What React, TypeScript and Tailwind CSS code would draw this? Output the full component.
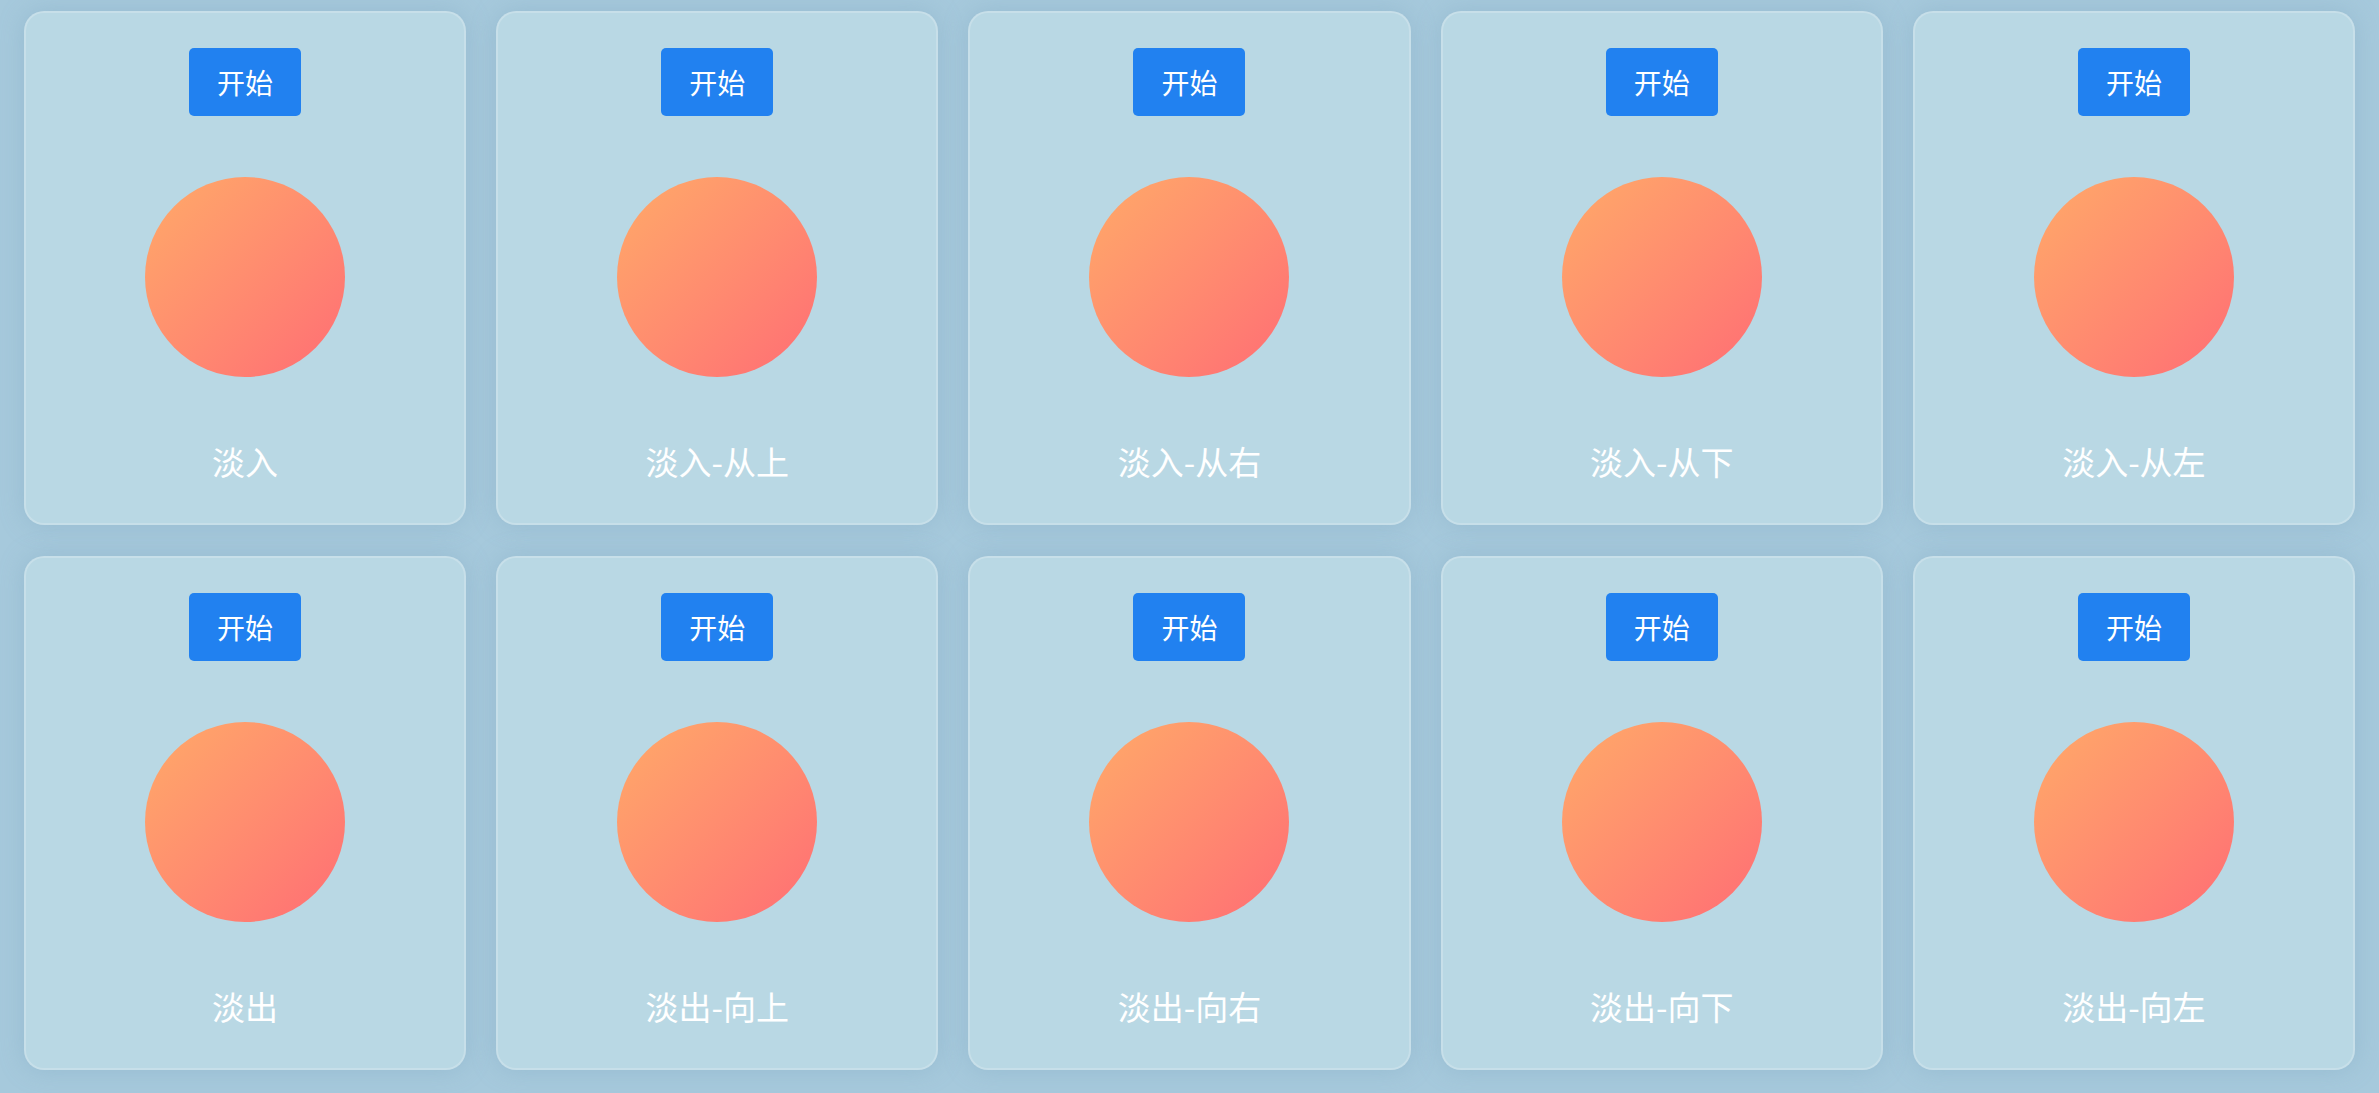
import React from 'react';

const rows = [
  ['淡入', '淡入-从上', '淡入-从右', '淡入-从下', '淡入-从左'],
  ['淡出', '淡出-向上', '淡出-向右', '淡出-向下', '淡出-向左'],
];

const Card = ({ label }: { label: string }) => (
  <div className="flex h-[514px] flex-col items-center justify-between rounded-[20px] border-2 border-white/20 bg-[#b9d8e4] pt-[35px] pb-[38px] shadow-[0_0_24px_rgba(120,160,185,0.35)]">
    <button className="h-[68px] w-[112px] rounded-[5px] bg-[#2181f0] text-[28px] leading-[68px] text-white">
      开始
    </button>
    <div className="h-[200px] w-[200px] rounded-full bg-gradient-to-br from-[#ffaa68] to-[#ff6c74]" />
    <div className="h-[48px] text-[33px] leading-[48px] text-white">{label}</div>
  </div>
);

export default function App() {
  return (
    <div
      className="min-h-screen bg-[#a6c9dc] px-[24px] pt-[11px] pb-[22px]"
      style={{ fontFamily: '"Noto Sans CJK SC", "Noto Sans", sans-serif' }}
    >
      <div className="flex flex-col gap-[31px]">
        {rows.map((row, i) => (
          <div key={i} className="grid grid-cols-5 gap-[30px]">
            {row.map(label => (
              <Card key={label} label={label} />
            ))}
          </div>
        ))}
      </div>
    </div>
  );
}
